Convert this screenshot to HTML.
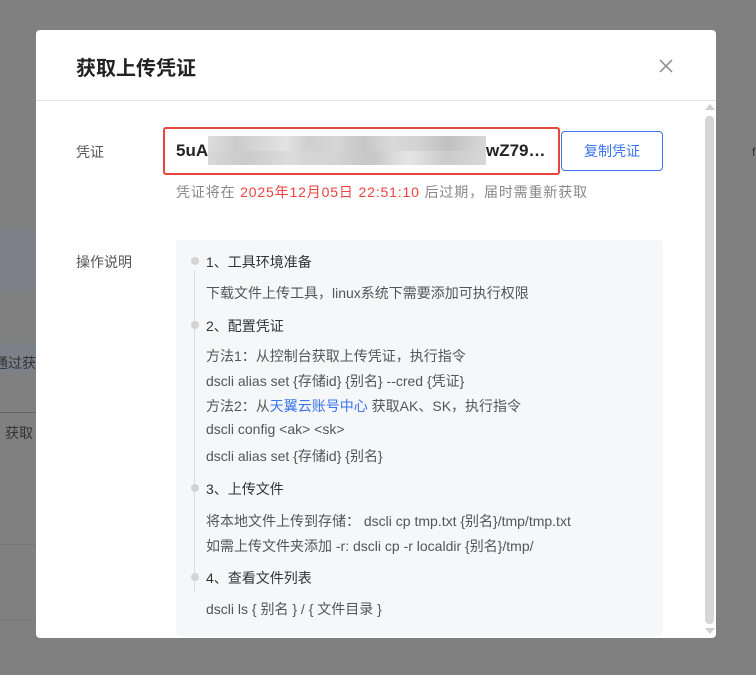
<!DOCTYPE html>
<html><head><meta charset="utf-8"><style>
*{margin:0;padding:0;box-sizing:border-box}
body{width:756px;height:675px;overflow:hidden;background:#808080;font-family:"Liberation Sans","Noto Sans CJK SC",sans-serif;position:relative}
.a{position:absolute;white-space:nowrap}
.modal{position:absolute;left:36px;top:30px;width:680px;height:608px;background:#fff;border-radius:4px;overflow:hidden}
.t{font-size:14px;color:#555}
.dot{position:absolute;left:15px;width:8px;height:8px;border-radius:50%;background:#d4d4d4}
.ln{position:absolute;left:18px;width:1px;background:#dcdcdc}
</style></head><body>
<div class="a" style="left:0;top:228px;width:36px;height:62px;background:#7d8088"></div>
<div class="a" style="left:0;top:343px;width:36px;height:30px;background:#7c8088"></div>
<div class="a" style="left:-6px;top:353px;font-size:14px;color:#333">通过获取</div>
<div class="a" style="left:0;top:412px;width:36px;height:1px;background:#666"></div>
<div class="a" style="left:5px;top:423px;font-size:14px;color:#333">获取</div>
<div class="a" style="left:0;top:544px;width:36px;height:1px;background:#777"></div>
<div class="a" style="left:0;top:620px;width:36px;height:1px;background:#777"></div>
<div class="a" style="left:752px;top:145px;font-size:12px;color:#333">f</div>

<div class="modal">
  <div class="a" style="left:40px;top:22px;font-size:20px;font-weight:bold;color:#222">获取上传凭证</div>
  <svg class="a" style="left:622px;top:28px" width="16" height="16" viewBox="0 0 16 16"><path d="M2 2L14 14M14 2L2 14" stroke="#888" stroke-width="1.5"/></svg>
  <div class="a" style="left:0;top:70px;width:680px;height:1px;background:#e4e4ea"></div>
  <div class="a" style="left:669px;top:74px;width:0;height:0;border-left:5px solid transparent;border-right:5px solid transparent;border-bottom:6px solid #d0d0d0"></div>
  <div class="a" style="left:669px;top:86px;width:9px;height:508px;background:#d6d6d6;border-radius:4px"></div>
  <div class="a" style="left:669px;top:598px;width:0;height:0;border-left:5px solid transparent;border-right:5px solid transparent;border-top:6px solid #d0d0d0"></div>

  <div class="a t" style="left:40px;top:112px">凭证</div>
  <div class="a" style="left:127px;top:97px;width:397px;height:48px;border:2px solid #e8453c;border-radius:3px"></div>
  <div class="a" style="left:140px;top:111px;font-size:17px;font-weight:bold;color:#222">5uA</div>
  <div class="a" style="left:172px;top:106px;width:278px;height:29px;background:linear-gradient(90deg,#ddd,#ccc 10%,#d8d8d8 20%,#e3e3e3 28%,#cfcfcf 36%,#d6d6d6 46%,#c6c6c6 56%,#d9d9d9 66%,#d2d2d2 76%,#c0c0c0 86%,#d8d8d8)"></div>
  <div class="a" style="left:172px;top:121px;width:278px;height:14px;background:linear-gradient(90deg,#d6d6d6,#c9c9c9 15%,#dadada 30%,#d4d4d4 45%,#c5c5c5 60%,#ececec 72%,#d0d0d0 85%,#d8d8d8);opacity:.7"></div>
  <div class="a" style="left:450px;top:111px;font-size:17px;font-weight:bold;color:#222">wZ79…</div>
  <div class="a" style="left:525px;top:101px;width:102px;height:40px;border:1px solid #3a74f0;border-radius:4px;color:#3a74f0;font-size:14px;text-align:center;line-height:38px">复制凭证</div>
  <div class="a" style="left:140px;top:152px;font-size:14px;color:#888;letter-spacing:.85px">凭证将在 <span style="color:#f04040">2025年12月05日 22:51:10</span> 后过期，届时需重新获取</div>

  <div class="a t" style="left:40px;top:222px">操作说明</div>
  <div class="a" style="left:140px;top:210px;width:487px;height:396px;background:#f6f7f9;border-radius:4px">
    <div class="ln" style="top:30px;height:322px"></div>
    <div class="dot" style="top:17px"></div><div class="a t" style="left:30px;top:12px;color:#333">1、工具环境准备</div>
    <div class="a t" style="left:30px;top:43px">下载文件上传工具，linux系统下需要添加可执行权限</div>
    <div class="dot" style="top:81px"></div><div class="a t" style="left:30px;top:76px;color:#333">2、配置凭证</div>
    <div class="a t" style="left:30px;top:106px">方法1：从控制台获取上传凭证，执行指令</div>
    <div class="a t" style="left:30px;top:131px">dscli alias set {存储id} {别名} --cred {凭证}</div>
    <div class="a t" style="left:30px;top:156px">方法2：从<span style="color:#3a74f0">天翼云账号中心</span> 获取AK、SK，执行指令</div>
    <div class="a t" style="left:30px;top:181px">dscli config &lt;ak&gt; &lt;sk&gt;</div>
    <div class="a t" style="left:30px;top:206px">dscli alias set {存储id} {别名}</div>
    <div class="dot" style="top:244px"></div><div class="a t" style="left:30px;top:239px;color:#333">3、上传文件</div>
    <div class="a t" style="left:30px;top:271px">将本地文件上传到存储： dscli cp tmp.txt {别名}/tmp/tmp.txt</div>
    <div class="a t" style="left:30px;top:296px">如需上传文件夹添加 -r: dscli cp -r localdir {别名}/tmp/</div>
    <div class="dot" style="top:333px"></div><div class="a t" style="left:30px;top:328px;color:#333">4、查看文件列表</div>
    <div class="a t" style="left:30px;top:359px">dscli ls { 别名 } / { 文件目录 }</div>
  </div>
</div>
</body></html>
